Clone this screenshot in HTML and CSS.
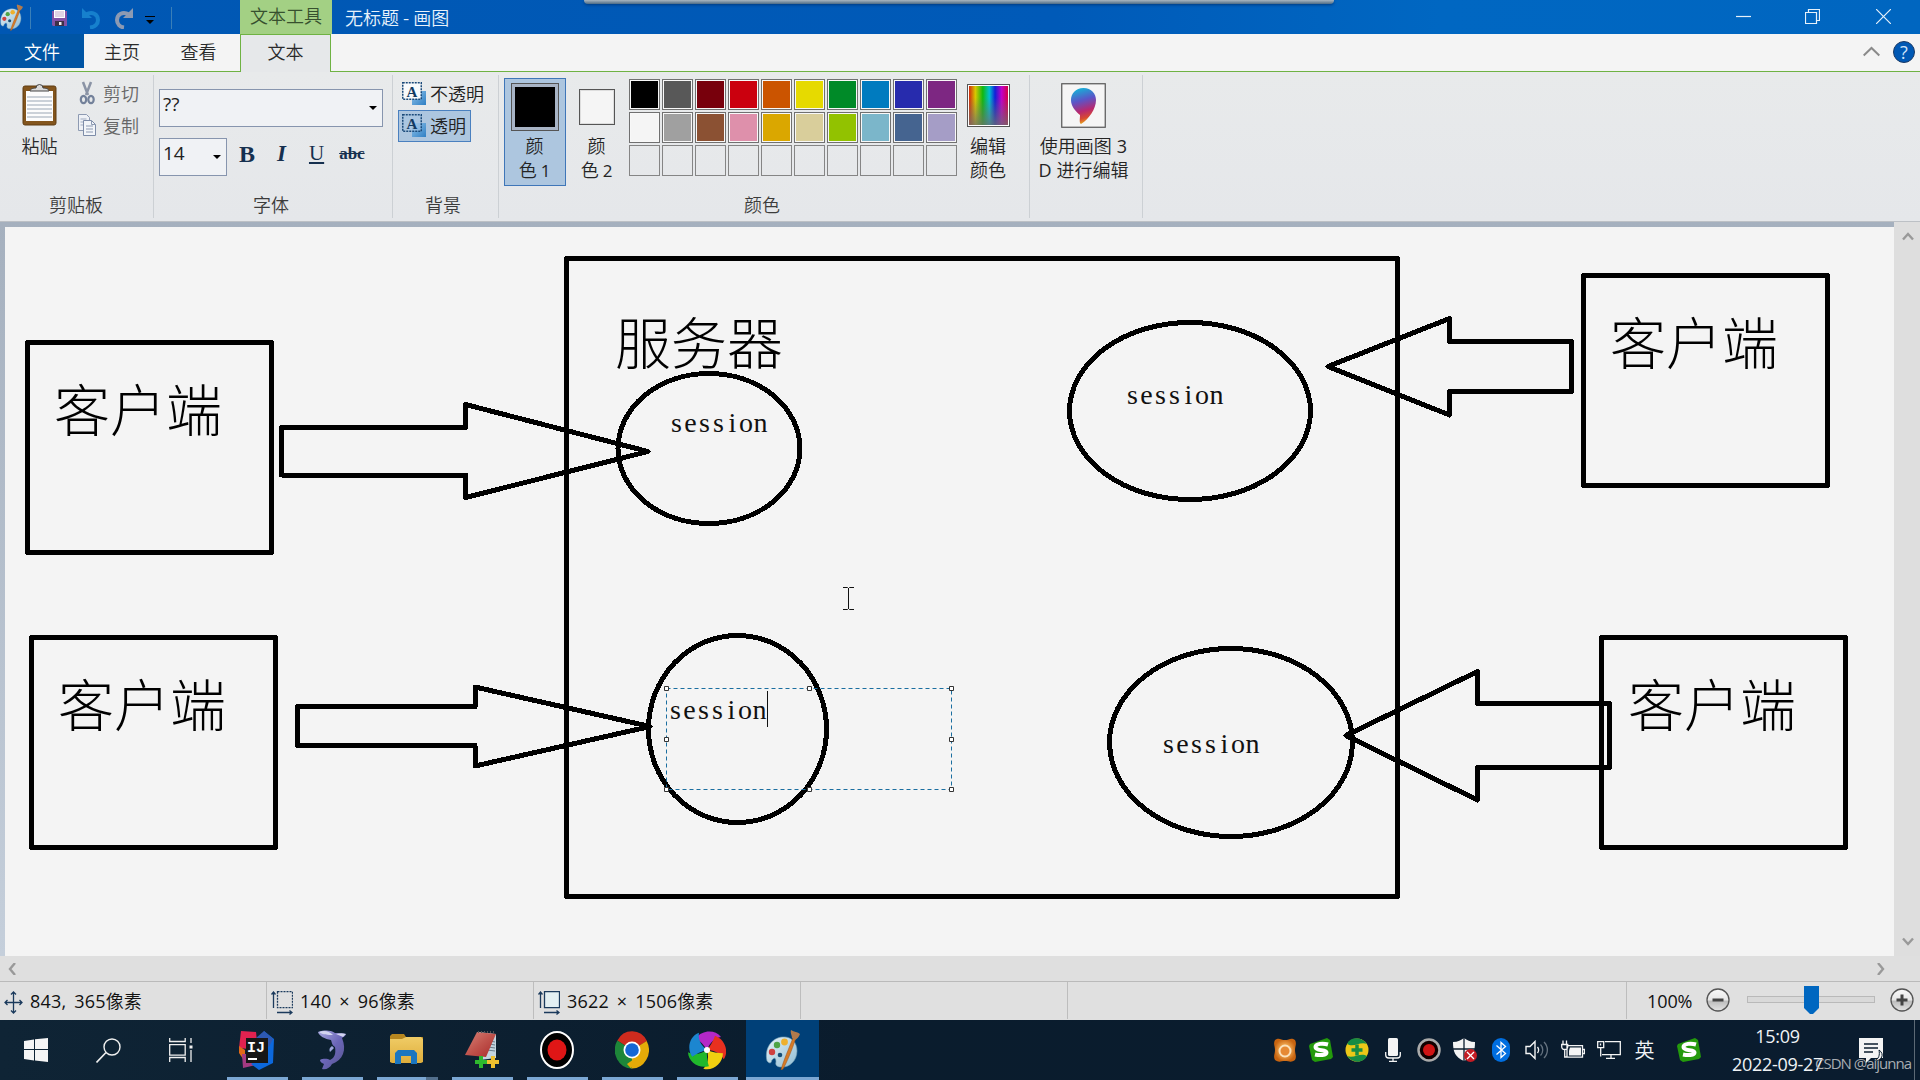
FILE: index.html
```html
<!DOCTYPE html>
<html lang="zh-CN">
<head>
<meta charset="utf-8">
<title>无标题 - 画图</title>
<link rel="stylesheet" href="styles.css">
</head>
<body>
<svg class="defs" width="0" height="0" aria-hidden="true">
  <defs>
    <linearGradient id="pal" x1="0" y1="0" x2="1" y2="1"><stop offset="0" stop-color="#e6f2f7"/><stop offset="1" stop-color="#8fbcd4"/></linearGradient>
    <linearGradient id="btn" x1="0" y1="0" x2="0" y2="1"><stop offset="0" stop-color="#fafafa"/><stop offset=".5" stop-color="#e6e6e6"/><stop offset=".55" stop-color="#bcbcbc"/><stop offset="1" stop-color="#e4e4e4"/></linearGradient>
    <linearGradient id="bluesq" x1="0" y1="0" x2="1" y2="1"><stop offset="0" stop-color="#8fc3ea"/><stop offset="1" stop-color="#2f7fc4"/></linearGradient>
    <linearGradient id="dol" x1="0" y1="0" x2="1" y2="1"><stop offset="0" stop-color="#a7a8df"/><stop offset=".5" stop-color="#6b66b8"/><stop offset="1" stop-color="#55538c"/></linearGradient>
    <linearGradient id="drop" x1=".3" y1="0" x2=".5" y2="1"><stop offset="0" stop-color="#12b4d8"/><stop offset=".35" stop-color="#5a55c8"/><stop offset=".65" stop-color="#b82870"/><stop offset=".85" stop-color="#d84a30"/><stop offset="1" stop-color="#e8b020"/></linearGradient>
    <linearGradient id="fold" x1="0" y1="0" x2="0" y2="1"><stop offset="0" stop-color="#f0cc66"/><stop offset="1" stop-color="#dfae3c"/></linearGradient>
    <linearGradient id="book" x1="0" y1="0" x2="1" y2="1"><stop offset="0" stop-color="#d88378"/><stop offset=".5" stop-color="#c0534c"/><stop offset="1" stop-color="#a82a2a"/></linearGradient>
    <radialGradient id="gold"><stop offset="0" stop-color="#fff6dc"/><stop offset=".45" stop-color="#f0a850"/><stop offset="1" stop-color="#c86410"/></radialGradient>
    <symbol id="palette" viewBox="0 0 36 40">
      <path d="M3 31C0 18 8 8 18 7c9-1 15 5 15 14 0 10-8 17-16 16-4 0-6-2-5-5 0-3-1-5-3-3-2 1-1 4-3 4-1 0-2-1-3-2z" fill="url(#pal)" stroke="#6f9ab0" stroke-width=".6"/>
      <circle cx="8" cy="22" r="3.2" fill="#cf4040"/><circle cx="13" cy="15" r="3.2" fill="#4fa446"/><circle cx="20.500" cy="12" r="3.400" fill="#eeb02e"/>
      <circle cx="16" cy="25" r="2.300" fill="#164e77"/>
      <path d="M17 40 C19 32 25 18 29 8l2.500 1C28 20 23 32 19 39z" fill="#d67a26" stroke="#98511a" stroke-width=".5"/>
      <path d="M28 8c0-3-2-5-1-8 3 2 7 2 9 4-1 3-3 5-5 6z" fill="#b27a4c"/>
    </symbol>
    <symbol id="sogou" viewBox="0 0 24 24">
      <path d="M1 6 18 0l3 2 3 17-2 2L6 24l-3-2L0 8z" fill="#249a0c"/>
      <path d="M19 6.500C14 5 6.500 5.500 6.500 9c0 4.500 11 2 11 5.500 0 3-7 3-11.500 2" fill="none" stroke="#fff" stroke-width="4"/>
    </symbol>
    <path id="petal" d="M0 0C-3-5-7-9-11-12-5-20 8-21 14-13 8-12 3-8 0 0z"/>
  </defs>
</svg>

<div class="window">
  <header class="titlebar">
    <div class="quick">
      <svg class="appico" width="24" height="27" viewBox="0 0 36 40"><use href="#palette"/></svg>
      <i class="sep"></i>
      <svg class="q-save" width="17" height="17" viewBox="0 0 17 17"><path d="M1 1h15v15H2l-1-1z" fill="#8453a6"/><path d="M3 0h11v8H3z" fill="#fff"/><path d="M4 2h9M4 4h9M4 6h9" stroke="#c2a8c8" stroke-width="1"/><path d="M4 11h9v5H4z" fill="#3d3148"/><path d="M8 12h2.500v3H8z" fill="#eee"/></svg>
      <svg class="q-undo" width="19" height="21" viewBox="0 0 19 21"><path d="M4 6.500C10 3 16 6 16 12c0 4-3 7-8 7.500" fill="none" stroke="#1680cd" stroke-width="4"/><path d="M0 0v10h10z" fill="#1680cd"/></svg>
      <svg class="q-redo" width="19" height="21" viewBox="0 0 19 21"><path d="M15 6.500C9 3 3 6 3 12c0 4 3 7 7 7.500" fill="none" stroke="#8c9ab3" stroke-width="4"/><path d="M19 0v10H9z" fill="#8c9ab3"/></svg>
      <svg class="q-more" width="10" height="8" viewBox="0 0 10 8"><path d="M0 .5h10" stroke="#000"/><path d="M1 4h8L5 8z"/></svg>
      <i class="sep"></i>
    </div>
    <div class="ctxtitle">文本工具</div>
    <div class="wintitle">无标题 - 画图</div>
    <div class="winbtns">
      <svg width="15" height="15" viewBox="0 0 15 15"><path d="M0 7.500h15"/></svg>
      <svg class="restore" width="15" height="15" viewBox="0 0 15 15"><path d="M.5 3.500h11v11H.5zM3.500 3.500v-3h11v11h-3"/></svg>
      <svg width="15" height="15" viewBox="0 0 15 15"><path d="M0 0l15 15M15 0 0 15"/></svg>
    </div>
    <div class="topstrip"></div>
  </header>

  <nav class="tabs">
    <div class="tab file">文件</div>
    <div class="tab home">主页</div>
    <div class="tab view">查看</div>
    <div class="tab text">文本</div>
    <div class="tabend">
      <svg width="17" height="11" viewBox="0 0 17 11"><path d="M.7 9.500 8.500 2l7.800 7.500" fill="none" stroke="#8a8a8a" stroke-width="2"/></svg>
      <span class="help">?</span>
    </div>
  </nav>

  <section class="ribbon">
    <div class="group clip">
      <div class="body">
        <div class="paste">
          <svg width="36" height="44" viewBox="0 0 36 44"><rect x="1" y="3" width="33" height="39" rx="2" fill="#83551d"/><rect x="1" y="3" width="33" height="39" rx="2" fill="none" stroke="#5f3c12"/><path d="M4 8h27v30H4z" fill="#fcfcfc"/><path d="M5 14h25M5 18h25M5 22h25M5 26h25M5 30h25M5 34h25" stroke="#9aa6b4"/><path d="M8 8c0-2 3-3 6-3a3.500 3.500 0 0 1 7 0c3 0 6 1 6 3z" fill="#d9d9d9" stroke="#444" stroke-width="1"/></svg>
          <span>粘贴</span>
        </div>
        <div class="cutcopy">
          <div><svg width="20" height="24" viewBox="0 0 20 24"><path d="M6 1l5 13M14 1 9 14" stroke="#8a93a5" stroke-width="2.500"/><ellipse cx="6.500" cy="18.500" rx="2.700" ry="3.700" fill="none" stroke="#73819a" stroke-width="2.200"/><ellipse cx="14" cy="18.500" rx="2.700" ry="3.700" fill="none" stroke="#73819a" stroke-width="2.200"/></svg><span>剪切</span></div>
          <div><svg width="20" height="24" viewBox="0 0 20 24"><path d="M1.500 1.500h8l3 3v13h-11z" fill="#eef1f6" stroke="#8d9ab2"/><path d="M3.500 6h6M3.500 9h5M3.500 12h5" stroke="#9fabc0"/><path d="M6.500 7.500h8l4 4v11h-12z" fill="#f2f5f9" stroke="#7d8ca8"/><path d="M14.500 7.500v4h4M9 13h7M9 16h7M9 19h7" stroke="#8d9ab2" fill="none"/></svg><span>复制</span></div>
        </div>
      </div>
      <div class="label">剪贴板</div>
    </div>
    <div class="group font">
      <div class="body">
        <div class="combo"><span>??</span><i class="caret"></i></div>
        <div class="fontrow">
          <div class="combo size"><span>14</span><i class="caret"></i></div>
          <b class="fb">B</b><i class="fi">I</i><u class="fu">U</u><s class="fs">abc</s>
        </div>
      </div>
      <div class="label">字体</div>
    </div>
    <div class="group bg">
      <div class="body">
        <div class="opt"><svg width="24" height="24" viewBox="0 0 24 24"><path d="M10 9h14v14H10z" fill="url(#bluesq)"/><path d="M.75.75h18.500v16.500H.75z" fill="#f8fafc" stroke="#1a4a7a" stroke-width="1.500" stroke-dasharray="2 1"/><text x="10" y="15" text-anchor="middle" class="aico">A</text></svg><span>不透明</span></div>
        <div class="opt on"><svg width="24" height="24" viewBox="0 0 24 24"><path d="M10 9h14v14H10z" fill="url(#bluesq)"/><path d="M.75.75h18.500v16.500H.75z" fill="#a9c6e2" fill-opacity=".6" stroke="#1a4a7a" stroke-width="1.500" stroke-dasharray="2 1"/><text x="10" y="15" text-anchor="middle" class="aico">A</text></svg><span>透明</span></div>
      </div>
      <div class="label">背景</div>
    </div>
    <div class="group colors">
      <div class="body">
        <div class="col c1"><i></i><span>颜<br>色 <em>1</em></span></div>
        <div class="col c2"><i></i><span>颜<br>色 <em>2</em></span></div>
        <div class="swatches">
          <i style="background:#000"></i><i style="background:#585858"></i><i style="background:#78000c"></i><i style="background:#cb000e"></i><i style="background:#cb5400"></i><i style="background:#e6da00"></i><i style="background:#008a28"></i><i style="background:#007bbf"></i><i style="background:#272bad"></i><i style="background:#7d2782"></i>
          <i style="background:#f5f5f5"></i><i style="background:#a0a0a0"></i><i style="background:#8b5133"></i><i style="background:#de90ab"></i><i style="background:#daa700"></i><i style="background:#d9ce9b"></i><i style="background:#92c200"></i><i style="background:#7bb6ca"></i><i style="background:#456490"></i><i style="background:#a59dc6"></i>
          <b></b><b></b><b></b><b></b><b></b><b></b><b></b><b></b><b></b><b></b>
        </div>
        <div class="edit"><i></i><span>编辑<br>颜色</span></div>
      </div>
      <div class="label">颜色</div>
    </div>
    <div class="group p3d">
      <div class="body">
        <div class="p3"><svg width="45" height="45" viewBox="0 0 45 45"><rect x=".75" y=".75" width="43.500" height="43.500" fill="#f5f5f5" stroke="#555" stroke-width="1.200"/><path d="M22.500 5c8 0 12.500 6 12.500 12 0 9-7 19-15 24-2-1-1-5-1-9-5-4-9-9-9-15 0-6 4.500-12 12.500-12z" fill="url(#drop)"/></svg>
        <span>使用画图 <em>3</em><br><em>D</em> 进行编辑</span></div>
      </div>
    </div>
  </section>

  <main class="workspace">
    <svg class="canvas" width="1889" height="729" viewBox="5 227 1889 729">
      <g class="ink">
        <path d="M27.500 342.500h244v210h-244zM31.500 637.500h244v210h-244zM1583.500 275.500h244v210h-244zM1601.500 637.500h244v210h-244zM566.500 258.500h831v638h-831z"/>
        <path d="M281.500 427.500H465.500V404.500L648 451.500 465.500 497.500V475H281.500zM297.500 706.500H475V687L650 726.500 475 766V745.500H297.500zM1571.500 341.500H1449.500V318.500L1328 366.500 1449.500 415V391.500H1571.500zM1609.500 703.500H1477.500V671.500L1346 735.500 1477.500 800V767.500H1609.500z"/>
        <ellipse cx="709" cy="448.500" rx="91" ry="75"/><ellipse cx="737.500" cy="729" rx="89" ry="93.500"/><ellipse cx="1190" cy="411" rx="120.500" ry="88.500"/><ellipse cx="1231" cy="742.500" rx="121.500" ry="94"/>
      </g>
      <g class="big"><text x="54" y="431">客户端</text><text x="58" y="726">客户端</text><text x="1610" y="364">客户端</text><text x="1628" y="726">客户端</text><text x="615" y="364">服务器</text></g>
      <g class="ses">
        <text y="432" x="676.500 690.500 704.500 718.500 732.500 746 760.500">session</text>
        <text y="719" x="675.500 689.500 703.500 717.500 731.500 745 759.500">session</text>
        <text y="404" x="1132.500 1146.500 1160.500 1174.500 1188.500 1202 1216.500">session</text>
        <text y="753" x="1168.500 1182.500 1196.500 1210.500 1224.500 1238 1252.500">session</text>
      </g>
      <path class="sel" d="M666.500 688.500h285v101h-285z"/>
      <path class="grip" d="M664.500 686.500h4v4h-4zM807.500 686.500h4v4h-4zM949.500 686.500h4v4h-4zM664.500 737.500h4v4h-4zM949.500 737.500h4v4h-4zM664.500 787.500h4v4h-4zM807.500 787.500h4v4h-4zM949.500 787.500h4v4h-4z"/>
      <path class="thin" d="M767.500 691v36M843 587.500h4.500l1 1 1-1h4.500M843 609.500h4.500l1-1 1 1h4.500M848.500 588v21"/>
    </svg>
    <div class="vscroll"><svg width="12" height="10" viewBox="0 0 12 10"><path d="M1 8.500 6 3l5 5.500"/></svg><svg width="12" height="10" viewBox="0 0 12 10"><path d="M1 1.500 6 7l5-5.500"/></svg></div>
  </main>
  <div class="hscroll"><svg width="10" height="12" viewBox="0 0 10 12"><path d="M8 0 3 6l5 6"/></svg><svg width="10" height="12" viewBox="0 0 10 12"><path d="M2 0l5 6-5 6"/></svg></div>

  <footer class="status">
    <div class="cell pos"><svg width="19" height="23" viewBox="0 0 19 23"><path d="M9.500 1v21M1 11.500h17M7 3.500 9.500 1 12 3.500M7 19.500 9.500 22l2.500-2.500M3.500 9 1 11.500 3.500 14M15.500 9l2.500 2.500-2.500 2.500" fill="none" stroke="#1b3a5c" stroke-width="1.300"/></svg><span><em>843, 365</em>像素</span></div>
    <div class="cell"><svg width="22" height="24" viewBox="0 0 22 24"><path d="M2.500 17V1M.5 3.500 2.500 1l2 2.500M6 21.500h15M18.500 19.500l2.500 2-2.500 2" fill="none" stroke="#1b3a5c" stroke-width="1.300"/><path d="M6.500.7h15v16h-15z" fill="none" stroke="#1b3a5c" stroke-width="1.300" stroke-dasharray="2 1"/></svg><span><em>140 × 96</em>像素</span></div>
    <div class="cell"><svg width="22" height="24" viewBox="0 0 22 24"><path d="M2.500 17V1M.5 3.500 2.500 1l2 2.500M6 21.500h15M18.500 19.500l2.500 2-2.500 2" fill="none" stroke="#1b3a5c" stroke-width="1.300"/><path d="M6.500.7h15v16h-15z" fill="#e3eff2" stroke="#1b3a5c" stroke-width="1.300"/></svg><span><em>3622 × 1506</em>像素</span></div>
    <div class="cell"></div>
    <div class="cell wide"></div>
    <div class="zoom"><em>100%</em>
      <svg width="24" height="24" viewBox="0 0 24 24"><circle cx="12" cy="12" r="11" fill="url(#btn)" stroke="#555" stroke-width="1.300"/><path d="M6.500 12h11" stroke="#444" stroke-width="3"/></svg>
      <div class="track"><svg class="thumb" width="15" height="28" viewBox="0 0 15 28"><path d="M0 0h15v22l-6 6H6l-6-6z" fill="#0067c0"/></svg></div>
      <svg width="24" height="24" viewBox="0 0 24 24"><circle cx="12" cy="12" r="11" fill="url(#btn)" stroke="#555" stroke-width="1.300"/><path d="M6.500 12h11M12 6.500v11" stroke="#444" stroke-width="3"/></svg>
    </div>
  </footer>
</div>

<div class="taskbar">
  <div class="sys"><svg width="24" height="24" viewBox="0 0 24 24"><path d="M0 3l10-1.500V11H0zM11 1.300 24 0v11H11zM0 12h10v10.500L0 21zM11 12h13v12l-13-1.500z" fill="#f5f5f5"/></svg></div>
  <div class="sys"><svg width="25" height="25" viewBox="0 0 25 25"><circle cx="16" cy="9" r="8" fill="none" stroke="#f0f0f0" stroke-width="1.400"/><path d="M10 14.500.5 24.500" stroke="#f0f0f0" stroke-width="1.600"/></svg></div>
  <div class="sys"><svg width="24" height="24" viewBox="0 0 24 24"><path d="M.7 0v3.500h15.500V0M.7 24v-4.500h15.500V24M.7 6.700h15.500v10.500H.7zM22 0v5M22 12v12" fill="none" stroke="#f0f0f0" stroke-width="1.300"/><path d="M20.500 7.500h3v3h-3z" fill="#f0f0f0"/></svg></div>
  <div class="apps">
    <div class="app"><svg width="36" height="40" viewBox="0 0 36 40"><path d="M2 1 17 2l2 18L0 18z" fill="#e22250"/><path d="M0 16l6 4v12L0 23z" fill="#e06a18"/><path d="M3 24h14l5 10L4 38z" fill="#a33a82"/><path d="M25 1l10 8-1 24-14 7-8-6 10-6z" fill="#0c68dc"/><path d="M17 8l8-7 9 8-4 8z" fill="#2e59b2"/><path d="M7 8h22v25H7z" fill="#171717"/><path d="M9 28h9v2H9z" fill="#fff"/><text x="8" y="22" class="ij">IJ</text></svg></div>
    <div class="app"><svg width="32" height="40" viewBox="0 0 32 40"><path d="M2 2C9 0 14 0 19 3c4 0 7 0 11 1-1 3-3 3-4 4 5 12 1 22-10 26-2 4-6 6-10 5l2-5c-2-1-4-2-4-4 4-2 8-1 10 0 5-2 6-7 5-13-3-2-3-4-4-7C9 9 3 6 2 2z" fill="url(#dol)"/><path d="M3 2c5-2 10-1 14 3-5 0-10 0-14-3zM20 4c4-1 7-1 10 0l-3 3z" fill="#d2d4ef"/><path d="M16 16c-3 2-3 4-2 6l4-4z" fill="#9da6db"/></svg></div>
    <div class="app folder"><svg width="33" height="32" viewBox="0 0 33 32"><path d="M0 2l2-2h12l2 3h17v6H0z" fill="#b6861f"/><path d="M0 5h12l4-2h15l2 2v23l-2 1H2l-2-1z" fill="url(#fold)"/><path d="M5 30V19l3-3h16l3 3v11h-6v-8H11v8z" fill="#1b76c0"/></svg></div>
    <div class="app"><svg width="34" height="40" viewBox="0 0 34 40"><path d="M13 2l18 2v24l-16 2z" fill="#c3d4df"/><path d="M25 11l5 1M24 14l6 1M23 17l7 1M22 20l8 1" stroke="#697b88"/><path d="M12 2 31 4 21 27 0 25z" fill="url(#book)"/><path d="M13 2h17" stroke="#555" stroke-width="2" stroke-dasharray="1 2"/><path d="M16 26v12M10 32h12" stroke="#2eb82e" stroke-width="4"/><path d="M28 26v12M22 32h12" stroke="#efc02e" stroke-width="4"/></svg></div>
    <div class="app"><svg width="34" height="38" viewBox="0 0 34 38"><ellipse cx="17" cy="19" rx="16" ry="18" fill="#000" stroke="#fff" stroke-width="2"/><ellipse cx="17" cy="19" rx="9.500" ry="10.500" fill="#df1616"/></svg></div>
    <div class="app"><svg width="34" height="38" viewBox="0 0 34 38" preserveAspectRatio="none"><path d="M17 19 2.300 9.500A17 18.500 0 0 1 32 10z" fill="#ce2b1e"/><path d="M17 19 31.700 10A17 18.500 0 0 1 16 37.500z" fill="#e5ab08"/><path d="M17 19 17 37.500A17 18.500 0 0 1 2.300 9.500z" fill="#1d8639"/><path d="M24.500 24 16 37.500 12 33z" fill="#e5ab08"/><circle cx="17" cy="19" r="8.500" fill="#fff"/><circle cx="17" cy="19" r="6.800" fill="#1566d4"/></svg></div>
    <div class="app"><svg width="38" height="40" viewBox="-19 -20 38 40"><use href="#petal" fill="#b428c8"/><use href="#petal" fill="#e83020" transform="rotate(72)"/><use href="#petal" fill="#f0d010" transform="rotate(144)"/><use href="#petal" fill="#20b82c" transform="rotate(216)"/><use href="#petal" fill="#1c86d0" transform="rotate(288)"/><circle r="3" fill="#fff"/></svg></div>
    <div class="app active"><svg width="36" height="40" viewBox="0 0 36 40"><use href="#palette"/></svg></div>
  </div>
  <div class="tray">
    <div><svg width="24" height="24" viewBox="0 0 24 24"><path d="M2 2c4-3 6 0 10 0s6-3 10 0c2 4 0 6 0 10s2 6 0 10c-4 3-6 1-10 1S6 25 2 22c-2-4 0-6 0-10S0 6 2 2z" fill="url(#gold)"/><circle cx="12" cy="13" r="5.500" fill="#e68a34" stroke="#fbe2bc" stroke-width="2"/></svg></div>
    <div><svg width="24" height="24" viewBox="0 0 24 24"><use href="#sogou"/></svg></div>
    <div><svg width="24" height="24" viewBox="0 0 24 24"><circle cx="12" cy="12" r="11.500" fill="#ecc818"/><path d="M2 6C6-2 17-1 22 6c-7-3-13 4-20 0zM22 18C18 26 7 25 2 18c7 3 13-4 20 0z" fill="#178c44"/><path d="M12 6.500v11M6.500 12h11" stroke="#178c44" stroke-width="3.500"/></svg></div>
    <div><svg width="16" height="24" viewBox="0 0 16 24"><rect x="3" y="0" width="10" height="18" rx="1.500" fill="#f4f4f4"/><path d="M.7 14v3q0 3 3 3h8.600q3 0 3-3v-3M8 20v3.300M4 23.300h8" fill="none" stroke="#f4f4f4" stroke-width="1.300"/></svg></div>
    <div><svg width="24" height="24" viewBox="0 0 24 24"><circle cx="12" cy="12" r="10.500" fill="#100" stroke="#aaa" stroke-width="2.500"/><circle cx="12" cy="12" r="6" fill="#d01414"/></svg></div>
    <div><svg width="24" height="24" viewBox="0 0 24 24"><path d="M0 4c5 0 8-2 11-4 3 2 6 4 11 4 0 10-2 15-11 19C2 19 0 14 0 4z" fill="#f4f4f4"/><path d="M11 0v23M0 11h22" stroke="#0b1d2e" stroke-width="1.300"/><circle cx="17.500" cy="17.500" r="6.500" fill="#c41c24"/><path d="M14 14l7 7M21 14l-7 7" stroke="#fff" stroke-width="1.300"/></svg></div>
    <div><svg width="18" height="24" viewBox="0 0 18 24"><rect width="18" height="24" rx="9" fill="#006ee0"/><path d="M4.500 7.500l9 8-4.500 4V4.500l4.500 4-9 8" fill="none" stroke="#fff" stroke-width="1.300"/></svg></div>
    <div><svg width="24" height="20" viewBox="0 0 24 20"><path d="M1 6.500h4l5-5v17l-5-5H1z" fill="none" stroke="#f4f4f4" stroke-width="1.400"/><path d="M12.500 7c1.500 2 1.500 4 0 6" fill="none" stroke="#f4f4f4" stroke-width="1.300"/><path d="M15.500 4.500c3 3 3 8 0 11M19 2c4.500 4.500 4.500 11.500 0 16" fill="none" stroke="#667380" stroke-width="1.300"/></svg></div>
    <div><svg width="24" height="20" viewBox="0 0 24 20"><path d="M6 5.700h15.500v11.500H6zM22 9.500h1.500v4H22M2 .5v4M5.500.5v4M.7 4.500h6v2q0 3-3 3t-3-3zM3.700 9.500v7.500H6" fill="none" stroke="#f4f4f4" stroke-width="1.300"/><path d="M9 7.500h11v8H8v-5z" fill="#f4f4f4"/></svg></div>
    <div><svg width="24" height="20" viewBox="0 0 24 20"><path d="M8 1.700h15.300v13H5M.7 1.700h6v6h-6zM3.700 8v8.500M14 15v3M9 18.300h9M3.500 3.500v2" fill="none" stroke="#f4f4f4" stroke-width="1.300"/></svg></div>
    <div class="ime">英</div>
    <div class="last"><svg width="24" height="24" viewBox="0 0 24 24"><use href="#sogou"/></svg></div>
  </div>
  <div class="clock">15:09<br>2022-09-27</div>
  <div class="action"><svg width="26" height="26" viewBox="0 0 26 26"><path d="M0 0h24v20H12l-5 5v-5H0z" fill="#f4f4f4"/><path d="M5 6h14M5 10h14M5 14h9" stroke="#0b1d2e" stroke-width="1.400"/><path d="M20 12c6 4 3 11-5 11 5-2 6-6 5-11z" fill="#f4f4f4" stroke="#0b1d2e" stroke-width="1"/></svg></div>
  <div class="mark">CSDN @aijunna</div>
</div>
</body>
</html>
```
FILE: styles.css
```css
* { box-sizing: border-box; }
body { margin: 0; width: 1920px; height: 1080px; overflow: hidden; font: 350 18px/24px "Noto Sans CJK SC", sans-serif; color: #2a2a2a; background: #f4f4f4; }
svg { display: block; flex: none; }
em { font: 17px/1 "Open Sans", sans-serif; }
.defs { position: absolute; }
.window { height: 1020px; display: flex; flex-direction: column; }

.titlebar { height: 34px; flex: none; display: flex; background: linear-gradient(90deg, #0057b3, #005ab8 55%, #0067c2 75%, #0066c0); position: relative; color: #e8f2fb; }
.quick { width: 240px; display: flex; align-items: flex-start; padding-top: 4px; }
.quick .sep { width: 1px; height: 22px; margin-top: 3px; background: #3a7fb8; }
.appico { margin: 0 7px 0 -1px; }
.q-save { margin: 6px 0 0 20px; }
.q-undo { margin: 4px 0 0 14px; }
.q-redo { margin: 4px 0 0 13px; }
.q-more { margin: 12px 16px 0 12px; }
.ctxtitle { width: 92px; padding: 3px 0 0 10px; background: #a3d084; color: #37502f; }
.wintitle { padding: 5px 0 0 13px; }
.winbtns { margin-left: auto; display: flex; gap: 54px; padding: 9px 29px 0 0; }
.winbtns svg { fill: none; stroke: #e6f1fa; stroke-width: 1.2; }
.restore { margin-right: 2px; }
.topstrip { position: absolute; left: 584px; top: 0; width: 750px; height: 4px; border-radius: 0 0 5px 5px; background: linear-gradient(#a9b6c0, #4d6c86); box-shadow: 0 1px 3px #003c80; }

.tabs { height: 38px; flex: none; display: flex; border-bottom: 1px solid #6fb243; }
.tab { padding-top: 5px; text-align: center; }
.file { width: 84px; height: 34px; background: #0055a5; color: #fff; }
.home { width: 76px; }
.view { width: 80px; padding-right: 3px; }
.text { width: 91px; height: 38px; background: #e6e8ea; border: 1px solid #6fb243; border-bottom: 0; padding-top: 4px; }
.tabend { margin-left: auto; display: flex; gap: 13px; padding: 7px 5px 0 0; }
.tabend svg { margin-top: 5px; }
.help { width: 22px; height: 22px; border-radius: 50%; border: 1px solid #1b3a66; background: #0058b4; color: #cfe4fa; font: 18px/20px "Open Sans", sans-serif; text-align: center; }

.ribbon { height: 150px; flex: none; display: flex; padding-top: 3px; background: linear-gradient(#e8eaeb, #e5e7ea); border-bottom: 1px solid #bcc0c5; }
.group { height: 143px; border-right: 1px solid #ccd0d4; display: flex; flex-direction: column; }
.body { height: 117px; flex: none; }
.label { text-align: center; color: #3c3c3c; }
.clip { width: 154px; } .clip .label { padding-right: 1px; }
.clip .body { display: flex; }
.paste { width: 76px; padding-top: 8px; display: flex; flex-direction: column; align-items: center; gap: 6px; padding-left: 3px; }
.cutcopy { color: #666; padding-top: 6px; }
.cutcopy div { display: flex; gap: 6px; height: 32px; padding-left: 1px; }
.font { width: 239px; } .font .label { padding-right: 4px; }
.font .body { padding: 14px 0 0 5px; }
.combo { width: 224px; height: 38px; border: 1px solid #8795ae; background: #f0f2f5; display: flex; justify-content: space-between; padding: 1px 5px 0 3px; color: #222; font: 19px/26px "Open Sans", sans-serif; }
.caret { width: 0; height: 0; border: 4px solid transparent; border-top-color: #000; border-bottom: 0; margin-top: 15px; }
.fontrow { display: flex; margin-top: 11px; font: 24px/32px "Liberation Serif", serif; color: #16304f; }
.size { width: 68px; flex: none; }
.fb { margin-left: 12px; } .fi { margin-left: 22px; font-weight: bold; font-size: 23px; } .fu { margin-left: 23px; font-size: 21px; line-height: 31px; } .fs { margin-left: 15px; font-size: 17px; line-height: 31px; font-weight: bold; }
.bg { width: 106px; } .bg .label { padding-right: 5px; }
.bg .body { padding: 3px 0 0 5px; color: #222; }
.opt { height: 32px; display: flex; gap: 4px; padding: 4px 0 0 4px; }
.opt span { margin-top: -1px; white-space: nowrap; }
.opt.on { width: 73px; padding: 3px 0 0 3px; border: 1px solid #4a80bf; background: #adc6df; }
.aico { font: bold 15px "Liberation Serif", serif; fill: #123a62; }
.colors { width: 531px; } .colors .label { padding-right: 4px; }
.colors .body { display: flex; padding: 3px 0 0 5px; text-align: center; color: #242424; }
.col { width: 62px; height: 108px; border: 1px solid transparent; padding: 4px 1px 0 0; display: flex; flex-direction: column; align-items: center; }
.col i { width: 48px; height: 48px; border: 1px solid #555; background: #000; box-shadow: inset 0 0 0 3px #a8b4c5; margin-bottom: 2px; flex: none; }
.c1 { background: #adc6df; border-color: #3f76b8; }
.c2 i { width: 36px; height: 36px; margin: 6px 0 8px; background: #f5f5f5; border: 1.5px solid #555; box-shadow: inset 0 0 0 1px #ddd; }
.swatches { display: grid; grid-template-columns: repeat(10, 31px); grid-auto-rows: 31px; gap: 2px; margin: 1px 0 0 1px; align-content: start; }
.swatches i { border: 1px solid #707070; box-shadow: inset 0 0 0 1px #f8f8f8; }
.swatches b { border: 1px solid #858585; }
.edit { width: 62px; padding-top: 6px; }
.edit i { display: block; width: 43px; height: 43px; margin: 0 auto 6px; border: 1px solid #555; box-shadow: inset 0 0 0 1px #fff; background: linear-gradient(rgba(110,110,110,0) 30%, rgba(110,110,110,.8)), linear-gradient(90deg, #d01010, #d8c800 18%, #10b810 36%, #00c0d0 52%, #1020d8 66%, #c000c8 82%, #d80030); }
.p3d { width: 113px; }
.p3d em { font-size: 18px; }
.p3 { padding: 8px 5px 0 0; display: flex; flex-direction: column; align-items: center; gap: 5px; text-align: center; color: #242424; white-space: nowrap; }
.p3 span { word-spacing: 1px; }

.workspace { height: 734px; flex: none; display: flex; padding: 5px 0 0 5px; background: linear-gradient(90deg, transparent 1894px, #dedede 1894px), linear-gradient(#a5b0be, #c5cfdb); }
.canvas { background: #f4f4f4; }
.ink { fill: none; stroke: #000; stroke-width: 5; stroke-linejoin: round; shape-rendering: crispEdges; }
.big { font: 300 56px "Noto Sans CJK SC", sans-serif; fill: #000; }
.ses { font: 28px "Liberation Serif", serif; fill: #111; text-anchor: middle; }
.sel { fill: none; stroke: #1a6ea0; stroke-dasharray: 4 3; }
.grip { fill: #fff; stroke: #333; }
.thin { fill: none; stroke: #111; }
.vscroll { width: 26px; display: flex; flex-direction: column; justify-content: space-between; align-items: center; padding: 4px 0 9px 1px; }
.vscroll path, .hscroll path { fill: none; stroke: #999; stroke-width: 2.4; }
.hscroll { height: 26px; flex: none; display: flex; justify-content: space-between; align-items: center; padding: 0 34px 0 7px; background: #dfdfdf; border-bottom: 1px solid #bababa; }

.status { height: 38px; background: #e0e0e0; display: flex; color: #111; }
.cell { width: 267px; height: 37px; border-right: 1px solid #bdbdbd; padding: 8px 0 0 4px; display: flex; gap: 7px; white-space: nowrap; }
.cell svg { margin-top: 1px; }
.cell span { margin-top: -2px; }
.cell em { font-size: 18px; letter-spacing: .2px; word-spacing: 3px; }
.wide { width: 559px; }
.zoom { display: flex; align-items: flex-start; padding: 6px 0 0 20px; }
.zoom em { width: 59px; line-height: 26px; font-size: 18px; letter-spacing: -.1px; }
.track { width: 128px; height: 7px; margin: 8px 15px 0 17px; border: 1px solid #b9b9b9; background: #d9d9d9; position: relative; }
.thumb { position: absolute; left: 56px; top: -11px; }

.taskbar { height: 60px; display: flex; background: linear-gradient(90deg, #0f2435, #0a1c2d 45%, #0a1c2f); position: relative; color: #f0f3f6; }
.sys { width: 72.5px; display: flex; align-items: center; justify-content: center; }
.apps { display: flex; gap: 14px; margin-left: 9px; }
.app { width: 61px; height: 60px; display: flex; align-items: center; justify-content: center; border-bottom: 3px solid #7ba7d3; padding: 2px 1px 0 0; }
.folder { border-image: linear-gradient(90deg, #7ba7d3 47px, #526f8c 47px) 3; }
.active { width: 73px; margin-left: -6px; background: #004078; }
.ij { font: bold 15px "Liberation Mono", monospace; fill: #fff; }
.tray { display: flex; margin-left: 448px; }
.tray div { width: 36px; height: 60px; display: flex; align-items: center; justify-content: center; }
.tray .ime { font-size: 20px; }
.tray .last { width: 52px; }
.clock { width: 126px; padding-top: 2px; font: 18px/28px "Open Sans", sans-serif; text-align: center; letter-spacing: -.3px; }
.action { padding: 18px 0 0 18px; width: 74px; border-right: 1px solid #5c6975; }
.mark { position: absolute; left: 1815px; top: 32px; font: 15px/22px "Open Sans", sans-serif; letter-spacing: -1px; color: #a8adb2; white-space: nowrap; }
```
